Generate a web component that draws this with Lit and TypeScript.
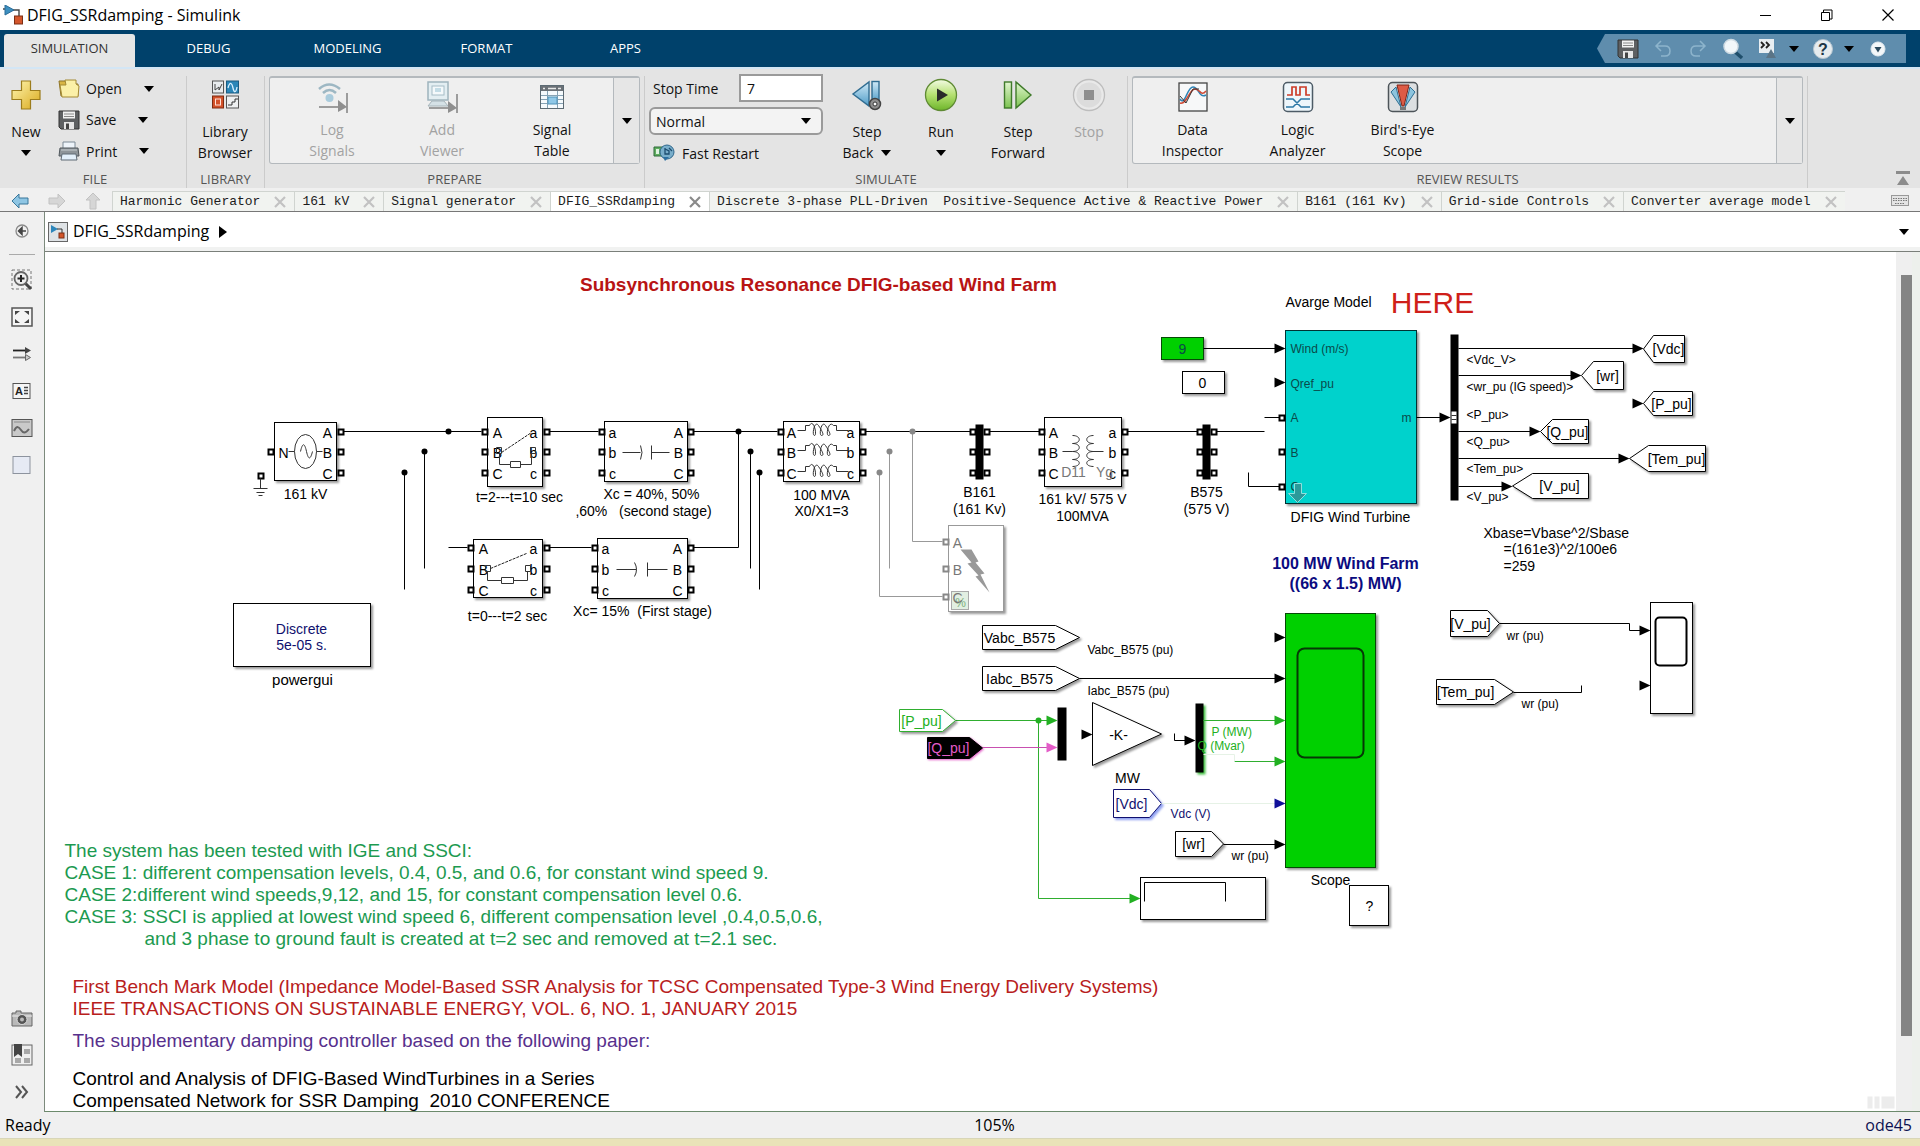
import { LitElement, html, svg, css } from "lit";
import { customElement, state } from "lit/decorators.js";
import { classMap } from "lit/directives/class-map.js";

/* ---------- icons ---------- */

const caret = html`<svg class="caret" viewBox="0 0 10 6" aria-hidden="true"><path d="M0 0h10L5 6z" /></svg>`;

const icons = {
  app: html`<svg width="20" height="20" viewBox="0 0 20 20">
    <path d="M0 4h3M9 5h7v7" fill="none" stroke="#444" stroke-width="1.4" />
    <path d="M2 0l9 5-9 5z" fill="#3c8fc0" stroke="#2b6d98" />
    <rect x="11.500" y="11" width="8" height="8" fill="#d4562b" stroke="#7c2f14" />
  </svg>`,
  model: html`<svg width="20" height="20" viewBox="0 0 20 20">
    <rect x=".5" y=".5" width="19" height="19" fill="#dfe3e6" stroke="#666" />
    <path d="M3 3l7 4-7 4z" fill="#2d86bb" />
    <path d="M9 7h5v4" fill="none" stroke="#333" />
    <rect x="11" y="11" width="5" height="5" fill="#d4562b" stroke="#7c2f14" />
  </svg>`,
  plus: html`<svg width="32" height="32" viewBox="0 0 32 32">
    <defs><linearGradient id="gold" x1="0" y1="0" x2="1" y2="1"><stop offset="0" stop-color="#fff6b0" /><stop offset="1" stop-color="#d9a91c" /></linearGradient></defs>
    <path d="M11.500 2h9v9.500H30v9h-9.500V30h-9v-9.500H2v-9h9.500z" fill="url(#gold)" stroke="#9c7c1c" stroke-width="1.200" />
  </svg>`,
  open: html`<svg width="22" height="20" viewBox="0 0 22 20">
    <path d="M1 2h6l2 3h11v12H3z" fill="#d9b544" stroke="#8d7429" />
    <path d="M7 1h11v4l3 2-1 11H4L2 6h6z" fill="#fbf0a8" stroke="#a48a35" />
  </svg>`,
  save: html`<svg width="22" height="20" viewBox="0 0 22 20">
    <path d="M1 1h20v18H3l-2-2z" fill="#5e6062" stroke="#333" />
    <rect x="5" y="1.500" width="12" height="7" fill="#f2f2f2" /><path d="M6 4h10M6 6.500h10" stroke="#888" />
    <rect x="6" y="12" width="10" height="7" fill="#e6e6e6" /><rect x="8" y="13.500" width="3" height="5.500" fill="#444" />
  </svg>`,
  print: html`<svg width="22" height="20" viewBox="0 0 22 20">
    <path d="M5 1h12v7H5z" fill="#eef4fa" stroke="#7c8a96" />
    <path d="M2 7h18l1 8H1z" fill="#8d9499" stroke="#50575c" /><path d="M3 9h16" stroke="#c6ccd0" />
    <path d="M4 13h14l1 6H3z" fill="#e3f0fb" stroke="#5f6b75" />
  </svg>`,
  library: html`<svg width="32" height="32" viewBox="0 0 32 32">
    <rect x="3.500" y="2" width="11" height="12" fill="#e9ecee" stroke="#555" /><path d="M6 5v6l4-3v3l3-6" fill="none" stroke="#444" />
    <rect x="17.500" y="2" width="12" height="12" fill="#2a86b8" stroke="#1b5b80" /><path d="M19 9c2-7 4-5 5 0s3 5 4-1" fill="none" stroke="#d6efff" stroke-width="1.300" />
    <rect x="3.500" y="17" width="11" height="12" fill="#d2512a" stroke="#7e2a10" /><rect x="6.500" y="20" width="5" height="6" fill="none" stroke="#ffe0d4" />
    <rect x="17.500" y="17" width="12" height="12" fill="#eef0f1" stroke="#555" /><path d="M19 26h4v-3h3v-3h3" fill="none" stroke="#333" />
  </svg>`,
  log: html`<svg width="32" height="32" viewBox="0 0 32 32">
    <path d="M3 8q10-9 21 0M7 12q6.500-6 13 0" fill="none" stroke="#9db7c3" stroke-width="2.500" />
    <circle cx="13.500" cy="17" r="4" fill="#a9cbdc" />
    <path d="M3 26h22M31 12v20" stroke="#9c9c9c" stroke-width="2" /><path d="M22 19l9 7-9 5z" fill="#8f8f8f" />
  </svg>`,
  viewer: html`<svg width="32" height="32" viewBox="0 0 32 32">
    <rect x="2" y="1" width="20" height="18" fill="#e3eef2" stroke="#9fb4bd" stroke-width="1.500" />
    <rect x="6" y="5" width="12" height="9" fill="#f4f9fb" stroke="#a6bcc6" /><rect x="9" y="7" width="6" height="4" fill="#c3dce6" />
    <path d="M6 20h12l4 5H2z" fill="#d5e1e6" stroke="#a6b4ba" /><path d="M3 27h22M31 13v19" stroke="#9c9c9c" stroke-width="2" /><path d="M22 20l9 7-9 5z" fill="#8f8f8f" />
  </svg>`,
  table: html`<svg width="32" height="32" viewBox="0 0 32 32">
    <rect x="4.500" y="4.500" width="23" height="23" fill="#f5fafd" stroke="#5c6a73" />
    <rect x="5" y="5" width="22" height="5" fill="#6a7076" /><path d="M7 7.500h2M12 7.500h8M22 7.500h3" stroke="#e8e8e8" stroke-width="1.500" />
    <path d="M5 14.500h22M5 18.500h22M5 22.500h22M11.500 10v17M21.500 10v17" stroke="#86a2b4" />
    <rect x="12" y="16" width="9" height="7" fill="#8fc8e8" stroke="#4f92b8" />
  </svg>`,
  stepBack: html`<svg width="32" height="32" viewBox="0 0 32 32">
    <defs><linearGradient id="sky" x1="0" y1="0" x2="0" y2="1"><stop offset="0" stop-color="#cfe9f7" /><stop offset="1" stop-color="#4f9cc7" /></linearGradient></defs>
    <path d="M18 3v24L2 15z" fill="url(#sky)" stroke="#2f6c91" stroke-width="1.400" />
    <rect x="21" y="2.500" width="7" height="21" fill="url(#sky)" stroke="#2f6c91" stroke-width="1.400" />
    <circle cx="24" cy="25" r="5.500" fill="#8f8f8f" stroke="#444" stroke-width="1.500" /><circle cx="24" cy="25" r="2" fill="#fff" stroke="#333" />
  </svg>`,
  run: html`<svg width="34" height="34" viewBox="0 0 34 34">
    <defs><linearGradient id="lime" x1="0" y1="0" x2="0" y2="1"><stop offset="0" stop-color="#f3fbe4" /><stop offset=".5" stop-color="#b4e070" /><stop offset="1" stop-color="#6db52a" /></linearGradient></defs>
    <circle cx="17" cy="17" r="15.500" fill="url(#lime)" stroke="#5f8a34" stroke-width="1.300" /><path d="M13 10.500l11 6.500-11 6.500z" fill="#2a2a2a" />
  </svg>`,
  stepFwd: html`<svg width="32" height="32" viewBox="0 0 32 32">
    <defs><linearGradient id="leaf" x1="0" y1="0" x2="0" y2="1"><stop offset="0" stop-color="#e2f5d0" /><stop offset="1" stop-color="#7cc450" /></linearGradient></defs>
    <rect x="2.500" y="3" width="7" height="26" fill="url(#leaf)" stroke="#3f7a2a" stroke-width="1.400" />
    <path d="M14 3v26l15-13z" fill="url(#leaf)" stroke="#3f7a2a" stroke-width="1.400" />
  </svg>`,
  stop: html`<svg width="34" height="34" viewBox="0 0 34 34">
    <circle cx="17" cy="17" r="15.500" fill="#e9e9e9" stroke="#bdbdbd" stroke-width="1.300" /><circle cx="17" cy="17" r="12.500" fill="#dcdcdc" /><rect x="12" y="12" width="10" height="10" fill="#8e8e8e" />
  </svg>`,
  fast: html`<svg width="22" height="18" viewBox="0 0 22 18">
    <path d="M1 3h9v9H1z" fill="#5fae5f" stroke="#2f6b3a" /><path d="M3 5h3v5H3z" fill="#dff3df" />
    <circle cx="14" cy="8" r="7" fill="#79aecb" stroke="#2f678c" /><path d="M12 4v6h4v-3l-4-2M16 4l3 3" fill="none" stroke="#1d4d70" stroke-width="1.300" /><path d="M12 17l-2-4h6z" fill="#2c6fa0" />
  </svg>`,
  data: html`<svg width="32" height="32" viewBox="0 0 32 32">
    <rect x="2" y="2" width="28" height="28" fill="#f7f8f9" stroke="#444" stroke-width="1.300" />
    <path d="M3 18c5 8 7-12 13-12s6 12 13 8" fill="none" stroke="#2f84b5" stroke-width="1.500" />
    <path d="M3 22c7 2 9-14 15-14 5 0 6 8 11 2" fill="none" stroke="#d04a36" stroke-width="1.500" />
    <path d="M3 15l6 7 7-14h6" fill="none" stroke="#333" />
  </svg>`,
  logic: html`<svg width="32" height="32" viewBox="0 0 32 32">
    <rect x="1.500" y="1.500" width="29" height="29" rx="4" fill="#eef6fb" stroke="#4d5b66" stroke-width="1.500" />
    <path d="M5 14h5V6h4v8h4V6h6v8h4" fill="none" stroke="#cc3d2a" stroke-width="1.700" />
    <path d="M4 18h7l8 8h9M4 26h7l8-8h9" fill="none" stroke="#2c78a6" stroke-width="1.500" />
  </svg>`,
  bird: html`<svg width="32" height="32" viewBox="0 0 32 32">
    <rect x="1.500" y="1.500" width="29" height="29" rx="4" fill="#dcdfe1" stroke="#4d5459" stroke-width="1.500" />
    <path d="M14 26L4 11l5-5zM18 26l10-15-5-5z" fill="#8cc4de" stroke="#2f6f93" />
    <path d="M10 4h12l-5 21h-2z" fill="#dd5b45" stroke="#7e2417" /><path d="M13 26h6v3h-6z" fill="#777" />
  </svg>`,
  arrowL: html`<svg width="18" height="16" viewBox="0 0 18 16"><path d="M1 8l7-7v4h9v6H8v4z" fill="#8fc6e4" stroke="#39779b" /></svg>`,
  arrowR: html`<svg width="18" height="16" viewBox="0 0 18 16"><path d="M17 8l-7-7v4H1v6h9v4z" fill="#d6d6d6" stroke="#c2c2c2" /></svg>`,
  arrowU: html`<svg width="16" height="18" viewBox="0 0 16 18"><path d="M8 1l7 7h-4v9H5V8H1z" fill="#d6d6d6" stroke="#c2c2c2" /></svg>`,
  cross: html`<svg width="12" height="12" viewBox="0 0 12 12"><path d="M1 1l10 10M11 1L1 11" stroke="currentColor" stroke-width="2.200" /></svg>`,
  undo: html`<svg width="20" height="20" viewBox="0 0 20 20"><path d="M3 7h9q5 0 5 5t-5 5H8M8 2L3 7l5 5" fill="none" stroke="#8db4cc" stroke-width="1.500" /></svg>`,
  redo: html`<svg width="20" height="20" viewBox="0 0 20 20"><path d="M17 7H8q-5 0-5 5t5 5h4M12 2l5 5-5 5" fill="none" stroke="#8db4cc" stroke-width="1.500" /></svg>`,
  find: html`<svg width="22" height="22" viewBox="0 0 22 22"><path d="M12 13l8 7" stroke="#1f4e6b" stroke-width="3.500" /><circle cx="9" cy="8.500" r="7" fill="#f2f7fa" stroke="#cfdbe3" stroke-width="1.500" /></svg>`,
  shortcut: html`<svg width="22" height="22" viewBox="0 0 22 22"><path d="M2 1h15v14H2z" fill="#e8eef2" /><path d="M4 4l3 3-3 3M9 4l3 3-3 3" fill="none" stroke="#222" stroke-width="1.800" /><path d="M14 11l5 9H9z" fill="#5b7486" /></svg>`,
  help: html`<svg width="22" height="22" viewBox="0 0 22 22"><circle cx="11" cy="11" r="9.500" fill="#e6ecef" stroke="#b6c5cf" /><text x="11" y="17" text-anchor="middle" font-size="16" font-weight="700" font-family="Liberation Sans, sans-serif" fill="#1e3646">?</text></svg>`,
  more: html`<svg width="18" height="18" viewBox="0 0 18 18"><circle cx="9" cy="9" r="7" fill="#f3f7f9" stroke="#dfe9ef" /><path d="M5.500 7h7L9 12.500z" fill="#2b4a5e" /></svg>`,
  keyboard: html`<svg width="18" height="12" viewBox="0 0 18 12"><rect x=".5" y=".5" width="17" height="10" fill="#e4e4e4" stroke="#999" /><path d="M2 3.500h14M2 5.500h14M4 8.500h10" stroke="#777" stroke-dasharray="1.500 1" /></svg>`,
  collapse: html`<svg width="16" height="14" viewBox="0 0 16 14"><path d="M1 0h14v3H1zM8 5l6 9H2z" fill="#8c8c8c" /></svg>`,
  hide: html`<svg width="16" height="16" viewBox="0 0 16 16"><circle cx="8" cy="8" r="6" fill="#f0f0f0" stroke="#8a8a8a" stroke-width="1.300" /><path d="M12 8H6M8 4.500L4.500 8 8 11.500z" stroke="#444" stroke-width="1.500" fill="#444" /></svg>`,
  zoom: html`<svg width="22" height="22" viewBox="0 0 22 22"><rect x="1" y="1" width="19" height="19" fill="none" stroke="#777" stroke-dasharray="3 2" /><path d="M14 14l6 6" stroke="#444" stroke-width="3" /><circle cx="10" cy="9.500" r="6.500" fill="#eee" stroke="#666" stroke-width="1.800" /><path d="M6.500 9.500h7M10 6v7" stroke="#222" stroke-width="2" /></svg>`,
  fit: html`<svg width="22" height="20" viewBox="0 0 22 20"><rect x="1" y="1" width="20" height="18" fill="#f4f4f4" stroke="#555" stroke-width="1.500" /><path d="M4 4h5L4 8zM18 4h-5l5 4zM4 16h5l-5-4zM18 16h-5l5-4z" fill="#444" /></svg>`,
  routes: html`<svg width="20" height="16" viewBox="0 0 20 16"><path d="M1 4.500h14" stroke="#222" stroke-width="1.800" /><path d="M1 11.500h14" stroke="#777" stroke-width="1.800" /><path d="M13 1l6 3.500L13 8z" fill="#444" /><path d="M13.500 8.500l5 3-5 3z" fill="#ccc" stroke="#666" /></svg>`,
  note: html`<svg width="20" height="16" viewBox="0 0 20 16"><rect x="1" y=".5" width="17" height="15" fill="#f6f6f6" stroke="#555" /><text x="3" y="12" font-size="11" font-weight="700" font-family="Liberation Sans, sans-serif" fill="#222">A</text><path d="M12 4.500h4M12 7.500h4M12 10.500h4" stroke="#444" stroke-width="1.300" /></svg>`,
  image: html`<svg width="22" height="18" viewBox="0 0 22 18"><rect x="1" y=".5" width="20" height="17" fill="#c9c9c9" stroke="#555" /><path d="M3 3h16" stroke="#aaa" stroke-width="2" /><path d="M3 12c3-6 5-4 7-1s4 4 8-1" fill="none" stroke="#666" stroke-width="2" /></svg>`,
  area: html`<svg width="20" height="18" viewBox="0 0 20 18"><rect x="1" y=".5" width="17" height="17" fill="#e6eaf4" stroke="#8d939e" /></svg>`,
  camera: html`<svg width="22" height="17" viewBox="0 0 22 17"><path d="M1 3h4V1h5v2h11v13H1z" fill="#b9b9b9" stroke="#666" /><path d="M1 6h20" stroke="#eee" /><circle cx="11" cy="9.500" r="5" fill="#555" stroke="#ddd" /><circle cx="11" cy="9.500" r="2" fill="#bbb" /></svg>`,
  browser: html`<svg width="22" height="22" viewBox="0 0 22 22"><rect x="1" y="1" width="20" height="20" fill="#efefef" stroke="#666" /><path d="M3 0h8v13l-4-3-4 3z" fill="#444" /><path d="M13 5h6v5h-6zM4 14h6v5H4zM13 14h6v5h-6z" fill="#a8a8a8" /></svg>`,
  expand: html`<svg width="16" height="14" viewBox="0 0 16 14"><path d="M2 1l5 6-5 6M8 1l5 6-5 6" fill="none" stroke="#555" stroke-width="2" /></svg>`,
  min: html`<svg width="12" height="12" viewBox="0 0 12 12"><path d="M0 6.500h11" stroke="#000" /></svg>`,
  max: html`<svg width="12" height="12" viewBox="0 0 12 12"><path d="M.5 3.500h8v8h-8zM2.500 3V1h8.500v9H9" fill="none" stroke="#000" /></svg>`,
  close: html`<svg width="12" height="12" viewBox="0 0 12 12"><path d="M.5 .5l11 11M11.500 .5l-11 11" stroke="#000" stroke-width="1.200" /></svg>`,
};

/* ---------- diagram primitives (window coordinates) ---------- */

const label = (x: number, y: number, text: string, cls = "t14 mid") => svg`<text x=${x} y=${y} class=${cls}>${text}</text>`;
const box = (x: number, y: number, w: number, h: number, cls = "block") => svg`<rect x=${x} y=${y} width=${w} height=${h} class=${cls} />`;
const wire = (d: string, cls = "wire") => svg`<path d=${d} class=${cls} />`;
const port = (x: number, y: number, cls = "port") => svg`<rect x=${x - 2} y=${y - 2} width="5" height="5" class=${cls} />`;
const ports = (x: number, ys: number[], cls = "port") => ys.map((y) => port(x, y, cls));
const dot = (x: number, y: number, cls = "dot") => svg`<circle cx=${x} cy=${y} r="3" class=${cls} />`;
const tip = (x: number, y: number, cls = "tip") => svg`<path d=${`M${x - 11} ${y - 5}L${x} ${y}L${x - 11} ${y + 5}z`} class=${cls} />`;

/** Goto tag: points left, flat on the right. */
const goto = (x0: number, x1: number, x2: number, y0: number, y1: number, text: string, tx: number) => svg`
  <path class="block" d=${`M${x0} ${(y0 + y1) / 2}L${x1} ${y0}H${x2}V${y1}H${x1}z`} />
  ${label(tx, (y0 + y1) / 2 + 5, text)}`;

/** From tag: flat on the left, points right. */
const from = (x0: number, x1: number, x2: number, y0: number, y1: number, text: string, tx: number, cls = "block", tcls = "") => svg`
  <path class=${cls} d=${`M${x0} ${y0}H${x1}L${x2} ${(y0 + y1) / 2}L${x1} ${y1}H${x0}z`} />
  ${label(tx, (y0 + y1) / 2 + 5, text, `t14 mid ${tcls}`)}`;

const letters = (x: number, ys: number[], chars: string, cls = "t14 mid") => ys.map((y, i) => label(x, y + 6, chars[i], cls));

const TOP = [432, 452, 473];
const LOW = [548, 569, 590];

const coil = (y: number) => svg`<path class="thin" d=${`M797 ${y}h8v-5h4c4-8 8 10 5 10s0-16 4-10 6 10 3 10 0-16 4-10 6 10 3 10 0-16 5-10h3v5h12`} />`;

const sources = () => svg`
  ${box(274, 423, 62, 58)} ${port(270, 452)} ${ports(340, TOP)}
  ${letters(327, TOP, "ABC")} ${label(283, 458, "N")}
  <ellipse class="thin" cx="305" cy="452" rx="11" ry="17" />
  <path class="thin" d="M288 452h6M316 452h6M300 452c2-9 4-9 6 0s4 8 6 0" />
  ${label(305, 499, "161 kV")}
  ${port(260, 476)} <path class="thin" d="M260 479v10M253 489h14M256 493h8M258 496h4" />
  ${wire("M343 432H481M424 452V569M404 473V590M448 548H467")}
  ${dot(448, 432)} ${dot(424, 452)} ${dot(404, 473)}
  ${box(233, 604, 137, 63)}
  ${label(301, 634, "Discrete", "t14 mid navy")} ${label(301, 650, "5e-05 s.", "t14 mid navy")}
  ${label(302, 685, "powergui", "t15 mid")}`;

const breakers = () => svg`
  ${box(487, 418, 55, 69)} ${ports(484, TOP)} ${ports(546, TOP)}
  ${letters(497, TOP, "ABC")} ${letters(533, TOP, "abc")}
  <path class="dash" d="M501 453L531 433" />
  <path class="thin" d="M496 448h5v6h-5zM530 448h5v6h-5zM499 454v11h11v-3h10v6h-10v-3M520 465h11V454" />
  ${label(519, 502, "t=2---t=10 sec")}
  ${box(473, 540, 69, 58)} ${ports(470, LOW)} ${ports(546, LOW)}
  ${letters(483, LOW, "ABC")} ${letters(533, LOW, "abc")}
  <path class="dash" d="M490 569L526 554" />
  <path class="thin" d="M485 566h5v6h-5zM525 566h5v6h-5zM487 572v9h14v-3h12v6h-12v-3M513 581h14v-9" />
  ${label(507, 621, "t=0---t=2 sec")}
  ${wire("M549 432H598M549 548H591")}`;

const capacitors = () => svg`
  ${box(604, 422, 83, 60)} ${ports(601, TOP)} ${ports(690, TOP)}
  ${letters(612, TOP, "abc")} ${letters(678, TOP, "ABC")}
  <path class="thin" d="M622 453h18M640 446q3 7 0 14M651 446v14M651 453h18" />
  ${label(651, 499, "Xc = 40%, 50%")} ${label(643, 516, ",60%   (second stage)")}
  ${box(597, 539, 90, 60)} ${ports(594, LOW)} ${ports(690, LOW)}
  ${letters(605, LOW, "abc")} ${letters(677, LOW, "ABC")}
  <path class="thin" d="M616 570h20M634 563q4 7 0 14M647 563v14M647 570h20" />
  ${label(642, 616, "Xc= 15%  (First stage)")}
  ${wire("M693 432H777M693 548H738V432M750 452V569M759 473V590")}
  ${dot(738, 432)} ${dot(750, 452)} ${dot(759, 473)}`;

const network = () => svg`
  ${box(783, 422, 76, 60)} ${ports(780, TOP)} ${ports(862, TOP)}
  ${letters(791, TOP, "ABC")} ${letters(850, TOP, "abc")}
  ${coil(431)} ${coil(451)} ${coil(472)}
  ${label(821, 500, "100 MVA")} ${label(821, 516, "X0/X1=3")}
  ${wire("M912 432V542H942M889 452V569M879 473V597H942", "wire grey")}
  ${wire("M865 432H970M988 432H1039M1126 432H1197M1215 432H1264")}
  ${dot(912, 432, "dot grey")} ${dot(889, 452, "dot grey")} ${dot(879, 473, "dot grey")}
  ${box(948, 526, 55, 86, "block grey")} ${ports(945, [542, 569, 597], "port grey")}
  <path class="bolt" d="M960 550h11l7 12-3 1 9 11-4 1 9 18-14-16 3-1-11-12 4-1z" />
  <rect class="badge" x="951" y="592" width="17" height="18" />
  ${label(960, 607, "%", "t12 mid badgetext")}
  ${letters(957, [542, 569, 597], "ABC", "t14 mid greytext")}
  <rect class="bar" x="975" y="425" width="8" height="55" /> ${ports(972, TOP)} ${ports(986, TOP)}
  ${label(979, 497, "B161")} ${label(979, 514, "(161 Kv)")}
  ${box(1044, 418, 77, 69)} ${ports(1041, TOP)} ${ports(1124, TOP)}
  ${letters(1053, TOP, "ABC")} ${letters(1112, TOP, "abc")}
  <path class="thin" d="M1062 452h10M1091 452h12M1072 436c9 0 9 8 0 8 9 0 9 8 0 8 9 0 9 8 0 8 9 0 9 7 0 7M1093 436c-9 0-9 8 0 8-9 0-9 8 0 8-9 0-9 8 0 8-9 0-9 7 0 7" />
  ${label(1073, 477, "D11", "t14 mid greytext")} ${label(1104, 477, "Yg", "t14 mid greytext")}
  ${label(1082, 504, "161 kV/ 575 V")} ${label(1082, 521, "100MVA")}
  <rect class="bar" x="1202" y="425" width="8" height="55" /> ${ports(1199, TOP)} ${ports(1213, TOP)}
  ${label(1206, 497, "B575")} ${label(1206, 514, "(575 V)")}`;

const turbine = () => svg`
  ${label(1328, 307, "Avarge Model")} ${label(1432, 313, "HERE", "here mid")}
  ${box(1161, 338, 42, 22, "block green")} ${label(1182, 354, "9", "t14 mid dim")}
  ${box(1182, 372, 42, 22)} ${label(1202, 388, "0")}
  ${box(1285, 331, 131, 173, "block cyan")}
  ${label(1290, 353, "Wind (m/s)", "t12 dim")} ${label(1290, 388, "Qref_pu", "t12 dim")}
  ${label(1290, 422, "A", "t12 dim")} ${label(1290, 457, "B", "t12 dim")} ${label(1290, 491, "C", "t12 dim")}
  ${label(1406, 422, "m", "t12 mid dim")}
  <path class="dive" d="M1294 484h7v10h5l-9 9-9-9h6z" />
  ${wire("M1203 349H1276M1264 418H1280M1248 473V487H1280M1416 418H1440")}
  ${tip(1285, 349)} ${tip(1285, 383)} ${ports(1281, [418, 452, 487])}
  ${label(1350, 522, "DFIG Wind Turbine")}
  ${label(1345, 569, "100 MW Wind Farm", "b16 mid")} ${label(1345, 589, "((66 x 1.5) MW)", "b16 mid")}
  ${tip(1450, 418)} <rect class="bar" x="1450" y="335" width="8" height="166" />
  <rect class="slot" x="1451" y="412" width="5" height="12" /><path class="thin" d="M1451 416h5M1451 420h5" />
  ${wire("M1458 349H1634M1458 376H1571M1458 432H1530M1458 459H1620M1458 487H1502")}
  ${tip(1643, 349)} ${tip(1581, 376)} ${tip(1643, 404)} ${tip(1540, 432)} ${tip(1629, 459)} ${tip(1512, 487)}
  ${goto(1643, 1653, 1684, 336, 363, "[Vdc]", 1668)}
  ${goto(1581, 1593, 1623, 362, 390, "[wr]", 1607)}
  ${goto(1643, 1653, 1692, 392, 416, "[P_pu]", 1671)}
  ${goto(1540, 1552, 1588, 420, 444, "[Q_pu]", 1567)}
  ${goto(1629, 1648, 1705, 446, 472, "[Tem_pu]", 1676)}
  ${goto(1512, 1532, 1588, 474, 499, "[V_pu]", 1559)}
  ${[["<Vdc_V>", 364], ["<wr_pu (IG speed)>", 391], ["<P_pu>", 419], ["<Q_pu>", 446], ["<Tem_pu>", 473], ["<V_pu>", 501]].map(([t, y]) => label(1466, y as number, t as string, "t12"))}
  ${label(1483, 538, "Xbase=Vbase^2/Sbase", "t14")} ${label(1503, 554, "=(161e3)^2/100e6", "t14")} ${label(1503, 571, "=259", "t14")}`;

const scopes = () => svg`
  ${from(982, 1055, 1079, 626, 650, "Vabc_B575", 1019)} ${label(1087, 654, "Vabc_B575 (pu)", "t12")}
  ${from(982, 1055, 1079, 667, 691, "Iabc_B575", 1019)} ${label(1087, 695, "Iabc_B575 (pu)", "t12")}
  ${wire("M1079 679H1276")}
  ${wire("M955 721H1048M1038 721V899H1131", "wire lime")} ${dot(1038, 721, "dot lime")}
  ${tip(1057, 721, "tip lime")} ${tip(1140, 899, "tip lime")}
  ${wire("M982 748H1048", "wire pink")} ${tip(1057, 748, "tip pink")}
  ${from(899, 942, 955, 710, 732, "[P_pu]", 921, "block limebox", "limetext")}
  ${from(927, 969, 982, 738, 759, "[Q_pu]", 948, "block pinkbox", "pinktext")}
  <rect class="bar" x="1057" y="708" width="9" height="53" />
  ${tip(1092, 735)} <path class="block" d="M1092 703L1161 734.500L1092 766z" />
  ${label(1118, 740, "-K-")} ${label(1127, 783, "MW")}
  ${wire("M1174 734V741H1185")} ${tip(1195, 741)}
  <rect class="bar glow" x="1195" y="704" width="8" height="69" />
  ${wire("M1203 721H1276M1234 762H1276", "wire lime")} ${wire("M1203 755H1234V762", "wire faint")}
  ${label(1211, 736, "P (MW)", "t12 limetext")} ${label(1197, 750, "Q (Mvar)", "t12 limetext")}
  ${from(1113, 1149, 1161, 790, 818, "[Vdc]", 1131, "block bluebox", "navy")}
  ${wire("M1161 804H1276", "wire faint")} ${label(1170, 818, "Vdc (V)", "t12 navy")}
  ${from(1175, 1211, 1223, 832, 857, "[wr]", 1193)} ${wire("M1223 845H1276")} ${label(1231, 860, "wr (pu)", "t12")}
  ${box(1285, 614, 90, 254, "block green")}
  <rect class="screen" x="1297" y="649" width="66" height="109" rx="7" />
  ${tip(1285, 638)} ${tip(1285, 679)} ${tip(1285, 721, "tip lime")} ${tip(1285, 762, "tip lime")} ${tip(1285, 804, "tip blue")} ${tip(1285, 845)}
  ${label(1330, 885, "Scope")}
  ${box(1140, 878, 125, 42)} ${wire("M1144 902V883H1225V902")}
  ${box(1349, 886, 39, 40)} ${label(1369, 911, "?")}
  ${from(1450, 1487, 1499, 611, 637, "[V_pu]", 1470)} ${label(1506, 640, "wr (pu)", "t12")}
  ${wire("M1499 624H1629V631H1640")} ${tip(1650, 631)} ${tip(1650, 686)}
  ${from(1436, 1494, 1513, 680, 705, "[Tem_pu]", 1465)} ${label(1521, 708, "wr (pu)", "t12")}
  ${wire("M1513 693H1581V686")}
  ${box(1650, 603, 42, 111)} <rect class="screen dark" x="1655" y="618" width="31" height="48" rx="4" />`;

const notes: Array<[number, number, string, string]> = [
  [64, 857, "forest", "The system has been tested with IGE and SSCI:"],
  [64, 879, "forest", "CASE 1: different compensation levels, 0.4, 0.5, and 0.6, for constant wind speed 9."],
  [64, 901, "forest", "CASE 2:different wind speeds,9,12, and 15, for constant compensation level 0.6."],
  [64, 923, "forest", "CASE 3: SSCI is applied at lowest wind speed 6, different compensation level ,0.4,0.5,0.6,"],
  [144, 945, "forest", "and 3 phase to ground fault is created at t=2 sec and removed at t=2.1 sec."],
  [72, 993, "brick", "First Bench Mark Model (Impedance Model-Based SSR Analysis for TCSC Compensated Type-3 Wind Energy Delivery Systems)"],
  [72, 1015, "brick", "IEEE TRANSACTIONS ON SUSTAINABLE ENERGY, VOL. 6, NO. 1, JANUARY 2015"],
  [72, 1047, "violet", "The supplementary damping controller based on the following paper:"],
  [72, 1085, "", "Control and Analysis of DFIG-Based WindTurbines in a Series"],
  [72, 1107, "", "Compensated Network for SSR Damping  2010 CONFERENCE"],
];

@customElement("model-canvas")
export class ModelCanvas extends LitElement {
  static styles = css`
    :host { display: block; overflow: hidden; background: #fff; }
    svg { display: block; width: 100%; height: 100%; }
    text { font-family: "Liberation Sans", Arial, sans-serif; fill: #000; white-space: pre; }
    .t12 { font-size: 12px; }
    .t14 { font-size: 14px; }
    .t15 { font-size: 15px; }
    .b16 { font-size: 16px; font-weight: 700; fill: #0b0b80; }
    .title { font-size: 19px; font-weight: 700; fill: #b81414; }
    .here { font-size: 30px; fill: #cf1f1a; }
    .note { font-size: 19px; }
    .mid { text-anchor: middle; }
    .navy { fill: #10106e; }
    .dim { fill: #0a4a4a; }
    .greytext { fill: #777; }
    .limetext { fill: #22b022; }
    .pinktext { fill: #e45cc8; }
    .forest { fill: #1c9a50; }
    .brick { fill: #b8201c; }
    .violet { fill: #57308c; }
    .block { fill: #fff; stroke: #000; filter: drop-shadow(2px 2px 1px rgba(0, 0, 0, 0.4)); }
    .block.grey { stroke: #999; }
    .block.green { fill: #00d000; stroke: #064a06; }
    .block.cyan { fill: #00d2cc; stroke: #033; }
    .block.limebox { stroke: #2fae2f; }
    .block.pinkbox { fill: #000; filter: drop-shadow(1px 1px 1px #e45cc8); }
    .block.bluebox { stroke: #10106e; filter: drop-shadow(2px 2px 1px #8fa0f0); }
    .wire { fill: none; stroke: #000; }
    .wire.grey { stroke: #999; }
    .wire.lime { stroke: #2fae2f; }
    .wire.pink { stroke: #c850b0; }
    .wire.faint { stroke: #e6f2e6; }
    .thin { fill: none; stroke: #333; stroke-width: 1; }
    .dash { fill: none; stroke: #222; stroke-dasharray: 3 1; }
    .port { fill: #fff; stroke: #000; stroke-width: 2; }
    .port.grey { stroke: #888; }
    .dot, .tip, .bar { fill: #000; }
    .dot.grey { fill: #888; }
    .dot.lime, .tip.lime { fill: #22b022; }
    .tip.pink { fill: #e45cc8; }
    .tip.blue { fill: #10109a; }
    .bar.glow { filter: drop-shadow(2px 2px 1px #3fbf3f); }
    .slot { fill: #fff; }
    .bolt { fill: #999; }
    .badge { fill: #e2efe2; stroke: #aaa; }
    .badgetext { fill: #7cb07c; }
    .dive { fill: #2b9a9a; stroke: #8fe0dc; }
    .screen { fill: none; stroke: #063806; stroke-width: 2; }
    .screen.dark { stroke: #000; }
    .mark { fill: #ececec; }
  `;

  render() {
    return html`<svg role="img" aria-label="DFIG_SSRdamping block diagram">
      <g transform="translate(-44.5 -252.5)">
        ${label(818, 291, "Subsynchronous Resonance DFIG-based Wind Farm", "title mid")}
        ${sources()} ${breakers()} ${capacitors()} ${network()} ${turbine()} ${scopes()}
        ${notes.map(([x, y, tone, text]) => label(x, y, text, `note ${tone}`))}
        <path class="mark" d="M1867 1097h5v12h-5zM1874 1097h5v12h-5zM1881 1097h13v12h-13z" />
      </g>
    </svg>`;
  }
}

/* ---------- window ---------- */

const ribbonTabs = ["SIMULATION", "DEBUG", "MODELING", "FORMAT", "APPS"];
const documents = [
  "Harmonic Generator",
  "161 kV",
  "Signal generator",
  "DFIG_SSRdamping",
  "Discrete 3-phase PLL-Driven  Positive-Sequence Active & Reactive Power",
  "B161 (161 Kv)",
  "Grid-side Controls",
  "Converter average model",
];

const big = (icon: unknown, first: string, second: unknown, cls = "", disabled = false) => html`
  <button class="big ${cls}" ?disabled=${disabled}>
    <span class="pic">${icon}</span><span>${first}</span><span>${second}</span>
  </button>`;

@customElement("app-root")
export class AppRoot extends LitElement {
  @state() private ribbon = 0;
  @state() private doc = 3;

  static styles = css`
    :host {
      display: flex; flex-direction: column; height: 100vh; overflow: hidden; background: #f0f0f0; color: #111;
      font: 14px/21px "Open Sans", "Noto Sans", sans-serif;
    }
    * { box-sizing: border-box; }
    button, input, select { font: inherit; color: inherit; margin: 0; padding: 0; border: 0; background: none; }
    svg { display: block; flex: none; }
    .caret { width: 10px; height: 6px; fill: #000; }
    .grow { flex: 1; }

    .titlebar { display: flex; align-items: center; height: 30px; padding: 0 26px 0 3px; gap: 4px; background: #fff; font-size: 16px; }
    .titlebar h1 { flex: 1; margin: 0; font: inherit; color: #000; }
    .window { display: flex; gap: 49px; }

    .ribbonbar { display: flex; align-items: flex-start; height: 39px; padding: 4px 14px 0 4px; gap: 8px; background: #00416b; border-bottom: 2px solid #d3e6f5; }
    .ribbonbar > .tab { width: 131px; height: 33px; padding-bottom: 5px; border-radius: 3px 3px 0 0; font-size: 13px; color: #fff; }
    .ribbonbar > .tab.on { background: #e5e6e6; color: #333; }
    .quick { display: flex; align-items: center; gap: 13px; height: 29px; padding: 0 17px 0 20px; background: #5f8dad; clip-path: polygon(8px 0, 100% 0, 100% 100%, 8px 100%, 0 50%); }
    .quick button { display: flex; align-items: center; justify-content: center; gap: 10px; min-width: 22px; }

    .strip { display: flex; height: 119px; padding-top: 7px; background: #e4e4e4; }
    .section { display: flex; flex-direction: column; border-right: 1px solid #cbcbcb; }
    .section > h2 { margin: 0; font: inherit; font-size: 13px; line-height: 17px; text-align: center; color: #555; }
    .body { display: flex; flex: 1; }
    .file { width: 187px; padding-left: 4px; }
    .library { width: 78px; }
    .prepare { width: 380px; padding: 0 4px; }
    .simulate { width: 483px; padding: 0 4px; }
    .review { flex: 0 1 680px; padding: 0 4px; }

    .big { display: flex; flex: none; flex-direction: column; align-items: center; width: 76px; padding-top: 2px; }
    .big span { display: flex; align-items: center; justify-content: center; gap: 8px; height: 21px; }
    .big .pic { height: 34px; margin-bottom: 9px; }
    .big:disabled { color: #a2a2a2; }
    .big.new { width: 44px; }
    .big.run { width: 72px; }
    .big.stop { width: 60px; }
    .big.wide { width: 82px; }
    .gallery { display: flex; flex: 1; height: 88px; border: 1px solid #b4b9bd; border-top-width: 2px; border-radius: 3px; background: #efefef; padding-left: 7px; }
    .gallery .big { width: 110px; padding-top: 2px; }
    .gallery .big .pic { margin-bottom: 5px; }
    .review .gallery .big { width: 105px; }
    .gallery .drop { display: flex; align-items: center; justify-content: center; width: 26px; margin-left: auto; border-left: 1px solid #b4b9bd; background: #e6e6e6; }

    .rows { display: flex; flex-direction: column; height: 94px; margin-top: -3px; padding-left: 10px; }
    .row { display: flex; flex: 1; align-items: center; }
    .row > span { margin: 0 22px 0 6px; }

    .fields { display: flex; flex: none; flex-direction: column; gap: 5px; width: 174px; margin-right: 6px; }
    .field { display: flex; align-items: center; justify-content: space-between; height: 28px; padding-left: 4px; margin-top: -2px; }
    .field input { width: 84px; height: 28px; padding: 0 6px; border: 2px solid #9a9a9a; background: #fff; }
    .pick { display: grid; align-items: center; }
    .pick select { grid-area: 1 / 1; height: 28px; padding: 0 5px; appearance: none; border: 2px solid #9a9a9a; border-radius: 6px; background: #f3f3f3; }
    .pick .caret { grid-area: 1 / 1; justify-self: end; margin-right: 12px; pointer-events: none; }
    .restart { display: flex; align-items: center; gap: 7px; height: 26px; padding-left: 4px; }
    .fold { align-self: flex-end; margin: 0 9px 3px auto; }

    .docs { display: flex; align-items: center; height: 24px; padding: 3px 11px 0 0; border-bottom: 1px solid #777; font: 13px/20px "Liberation Mono", monospace; }
    .nav { display: flex; align-items: center; justify-content: space-between; width: 112px; padding: 0 11px; }
    .docs .doc { display: flex; align-items: center; gap: 14px; height: 20px; padding: 0 8px 0 7px; border: 1px solid #d0d4d0; border-width: 1px 0 0 1px; background: #f1f3f0; color: #c2c2c2; }
    .doc a { color: #1c1c1c; text-decoration: none; white-space: pre; }
    .docs .doc.on { background: #fff; color: #8a8a8a; }

    .main { display: flex; flex: 1; min-height: 0; }
    .side { display: flex; flex-direction: column; align-items: center; width: 44px; padding: 8px 0 9px; gap: 15px; }
    .side button { display: grid; place-items: center; height: 22px; }
    .side hr { width: 26px; margin: -3px 0 -1px; border: 0; border-top: 1px solid #aaa; }
    .stage { display: flex; flex: 1; flex-direction: column; min-width: 0; border-left: 1px solid #7c8a7c; border-bottom: 1px solid #6c8a6c; }
    .crumbs { display: flex; align-items: center; gap: 5px; height: 40px; padding: 0 11px 0 3px; background: #fff; border-bottom: 1px solid #7a7f7a; box-shadow: inset 0 -4px #f1f2f1; font-size: 16px; }
    .crumbs a { color: #000; text-decoration: none; margin-right: 5px; }
    .view { display: flex; flex: 1; min-height: 0; }
    model-canvas { flex: 1; }
    .scroll { width: 24px; padding: 23px 8px 0 5px; background: linear-gradient(90deg, #efefef 16px, #edf0ec 16px); }
    .thumb { height: 91%; background: #848484; }

    .status { display: flex; align-items: center; height: 26px; padding: 0 8px 0 5px; font-size: 16px; color: #000; }
    .status > span { flex: 1; }
    .status > .mid { padding-left: 72px; text-align: center; }
    .status > .solver { text-align: right; color: #0c1050; }
    .desk { height: 8px; background: #e9e3b8; border-top: 1px solid #d8d6b8; }
  `;

  render() {
    return html`
      <header class="titlebar">
        ${icons.app}
        <h1>DFIG_SSRdamping - Simulink</h1>
        <div class="window">
          <button aria-label="Minimize">${icons.min}</button>
          <button aria-label="Restore">${icons.max}</button>
          <button aria-label="Close">${icons.close}</button>
        </div>
      </header>

      <nav class="ribbonbar">
        ${ribbonTabs.map((name, i) => html`
          <button class=${classMap({ tab: true, on: i === this.ribbon })} @click=${() => (this.ribbon = i)}>${name}</button>`)}
        <div class="grow"></div>
        <div class="quick">
          <button aria-label="Save">${icons.save}</button>
          <button aria-label="Undo">${icons.undo}</button>
          <button aria-label="Redo">${icons.redo}</button>
          <button aria-label="Find">${icons.find}</button>
          <button aria-label="Shortcuts">${icons.shortcut}${caret}</button>
          <button aria-label="Help">${icons.help}${caret}</button>
          <button aria-label="More">${icons.more}</button>
        </div>
      </nav>

      <section class="strip">
        <div class="section file">
          <div class="body">
            ${big(icons.plus, "New", caret, "new")}
            <div class="rows">
              <button class="row">${icons.open}<span>Open</span>${caret}</button>
              <button class="row">${icons.save}<span>Save</span>${caret}</button>
              <button class="row">${icons.print}<span>Print</span>${caret}</button>
            </div>
          </div>
          <h2>FILE</h2>
        </div>
        <div class="section library">
          <div class="body">${big(icons.library, "Library", "Browser")}</div>
          <h2>LIBRARY</h2>
        </div>
        <div class="section prepare">
          <div class="body">
            <div class="gallery">
              ${big(icons.log, "Log", "Signals", "", true)}
              ${big(icons.viewer, "Add", "Viewer", "", true)}
              ${big(icons.table, "Signal", "Table")}
              <button class="drop" aria-label="More prepare tools">${caret}</button>
            </div>
          </div>
          <h2>PREPARE</h2>
        </div>
        <div class="section simulate">
          <div class="body">
            <div class="fields">
              <div class="field"><label for="stop">Stop Time</label><input id="stop" .value=${"7"} /></div>
              <div class="pick">
                <select aria-label="Simulation mode"><option>Normal</option></select>${caret}
              </div>
              <button class="restart">${icons.fast}<span>Fast Restart</span></button>
            </div>
            ${big(icons.stepBack, "Step", html`Back ${caret}`)}
            ${big(icons.run, "Run", caret, "run")}
            ${big(icons.stepFwd, "Step", "Forward", "wide")}
            ${big(icons.stop, "Stop", "", "stop", true)}
          </div>
          <h2>SIMULATE</h2>
        </div>
        <div class="section review">
          <div class="body">
            <div class="gallery">
              ${big(icons.data, "Data", "Inspector")}
              ${big(icons.logic, "Logic", "Analyzer")}
              ${big(icons.bird, "Bird's-Eye", "Scope")}
              <button class="drop" aria-label="More review tools">${caret}</button>
            </div>
          </div>
          <h2>REVIEW RESULTS</h2>
        </div>
        <button class="fold" aria-label="Collapse toolstrip">${icons.collapse}</button>
      </section>

      <nav class="docs">
        <div class="nav">
          <button aria-label="Back">${icons.arrowL}</button>
          <button aria-label="Forward">${icons.arrowR}</button>
          <button aria-label="Up">${icons.arrowU}</button>
        </div>
        ${documents.map((name, i) => html`
          <div class=${classMap({ doc: true, on: i === this.doc })}>
            <a href="#" @click=${(e: Event) => { e.preventDefault(); this.doc = i; }}>${name}</a>
            <button aria-label="Close tab">${icons.cross}</button>
          </div>`)}
        <div class="grow"></div>
        <button aria-label="Keyboard shortcuts">${icons.keyboard}</button>
      </nav>

      <main class="main">
        <aside class="side">
          <button aria-label="Hide browser">${icons.hide}</button>
          <hr />
          <button aria-label="Zoom">${icons.zoom}</button>
          <button aria-label="Fit to view">${icons.fit}</button>
          <button aria-label="Signal routes">${icons.routes}</button>
          <button aria-label="Annotation">${icons.note}</button>
          <button aria-label="Image">${icons.image}</button>
          <button aria-label="Area">${icons.area}</button>
          <div class="grow"></div>
          <button aria-label="Screenshot">${icons.camera}</button>
          <button aria-label="Model browser">${icons.browser}</button>
          <button aria-label="Expand">${icons.expand}</button>
        </aside>
        <div class="stage">
          <div class="crumbs">
            ${icons.model}<a href="#">DFIG_SSRdamping</a>
            <svg width="8" height="12" viewBox="0 0 8 12"><path d="M0 0l8 6-8 6z" /></svg>
            <div class="grow"></div>
            <button aria-label="Recent models">${caret}</button>
          </div>
          <div class="view">
            <model-canvas></model-canvas>
            <div class="scroll"><div class="thumb"></div></div>
          </div>
        </div>
      </main>

      <footer class="status"><span>Ready</span><span class="mid">105%</span><span class="solver">ode45</span></footer>
      <div class="desk"></div>
    `;
  }
}
